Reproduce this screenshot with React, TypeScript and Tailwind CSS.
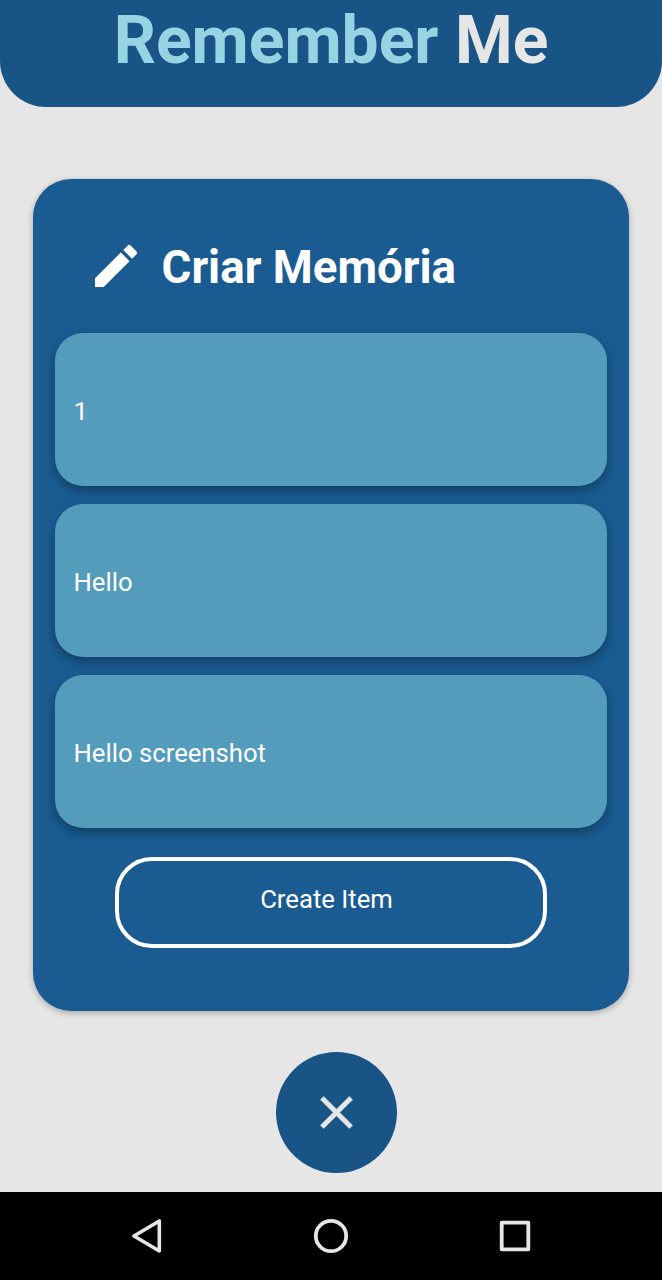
const fields = ['1', 'Hello', 'Hello screenshot'];

function PencilIcon() {
  return (
    <svg viewBox="0 0 24 24" className="size-14" fill="currentColor" aria-hidden="true">
      <path d="M3 17.25V21h3.75L17.81 9.94l-3.75-3.75L3 17.25zM20.71 7.04a1 1 0 0 0 0-1.41l-2.34-2.34a1 1 0 0 0-1.41 0l-1.83 1.83 3.75 3.75 1.83-1.83z" />
    </svg>
  );
}

function CloseIcon() {
  return (
    <svg viewBox="0 0 24 24" className="size-[55px]" fill="currentColor" stroke="currentColor" strokeWidth="0.25" strokeLinejoin="round" aria-hidden="true">
      <path d="M19 6.41 17.59 5 12 10.59 6.41 5 5 6.41 10.59 12 5 17.59 6.41 19 12 13.41 17.59 19 19 17.59 13.41 12z" />
    </svg>
  );
}

function NavigationBar() {
  return (
    <nav className="flex h-[88.5px] items-center justify-center gap-36 bg-black text-[#e6e6e6]">
      <svg viewBox="0 0 40 40" className="size-10" fill="none" stroke="currentColor" strokeWidth="3.6" strokeLinejoin="round">
        <path d="M32.3 5v30L7 20z" />
      </svg>
      <svg viewBox="0 0 40 40" className="size-10" fill="none" stroke="currentColor" strokeWidth="3.8">
        <circle cx="20" cy="20" r="15.2" />
      </svg>
      <svg viewBox="0 0 40 40" className="size-10" fill="none" stroke="currentColor" strokeWidth="3.8" strokeLinejoin="round">
        <rect x="6.7" y="6.7" width="26.6" height="26.6" />
      </svg>
    </nav>
  );
}

export default function App() {
  return (
    <div className="flex h-[1280px] w-[662px] flex-col overflow-hidden bg-[#e6e6e6] font-[Roboto,sans-serif]">
      <header className="flex h-[107.4px] shrink-0 justify-center rounded-b-[46px] bg-[#185486]">
        <h1 className="pt-px text-[66px] leading-[79px] font-bold text-[#e6e6e6]">
          <span className="text-[#97d4e3]">Remember</span> Me
        </h1>
      </header>

      <main className="flex flex-1 flex-col items-center pt-[72px]">
        <section className="flex h-[832px] w-[596px] flex-col items-center rounded-[38px] bg-[#1a5c92] pt-[59px] text-white shadow-[0_2px_6px_rgba(0,0,0,0.28)]">
          <div className="flex h-14 w-full items-center gap-[18px] pl-[54.5px]">
            <PencilIcon />
            <h2 className="pt-[3px] text-[45.7px] leading-[56px] font-bold">Criar Memória</h2>
          </div>
          <div className="mt-[39px] flex flex-col gap-[18px]">
            {fields.map((value) => (
              <div
                key={value}
                className="flex h-[153px] w-[552px] items-center rounded-[28px] bg-[#549cbc] px-[18.5px] pt-[3px] text-[25.7px] shadow-[0_5px_12px_rgba(0,0,0,0.33)]"
              >
                {value}
              </div>
            ))}
          </div>
          <button className="mt-[28.5px] flex h-[91px] w-[432px] items-center justify-center rounded-[37px] border-4 border-white pr-[9px] pb-[7px] text-[25.7px]">
            Create Item
          </button>
        </section>
        <button aria-label="Fechar" className="mt-[40.6px] ml-[11px] flex size-[121px] shrink-0 items-center justify-center rounded-full bg-[#185486] text-[#e6e6e6]">
          <CloseIcon />
        </button>
      </main>

      <NavigationBar />
    </div>
  );
}
